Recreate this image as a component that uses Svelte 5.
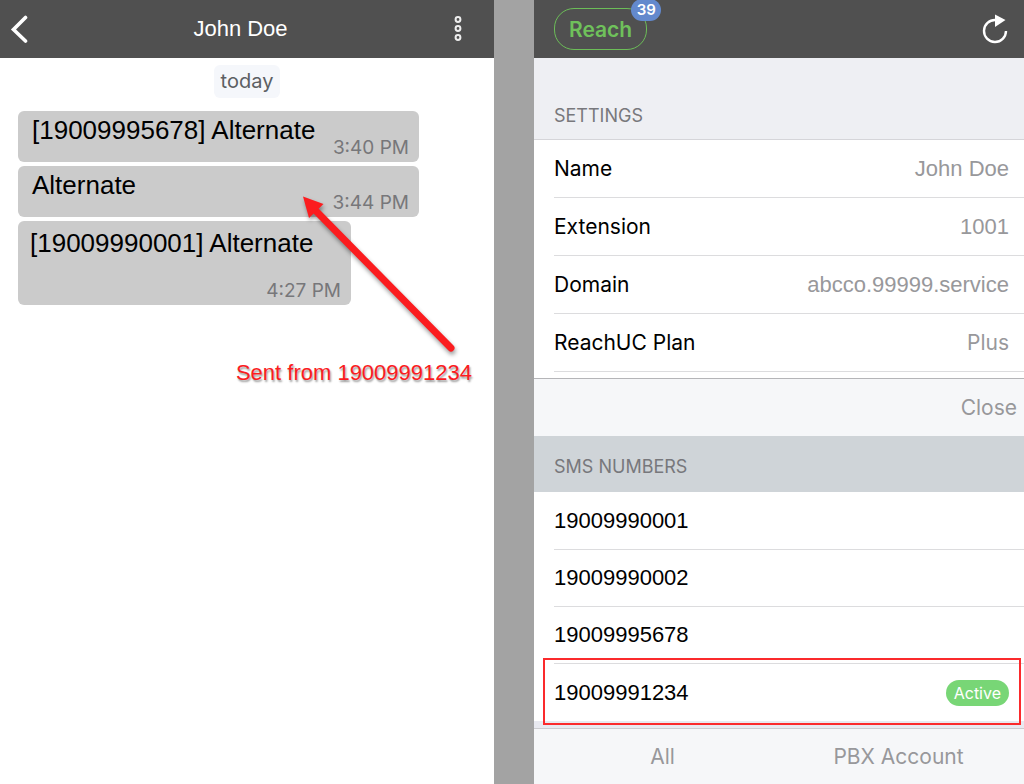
<script>
    const messages = [
        { text: "[19009995678] Alternate", time: "3:40 PM", tall: false },
        { text: "Alternate", time: "3:44 PM", tall: false },
        { text: "[19009990001] Alternate", time: "4:27 PM", tall: true },
    ];

    const settings = [
        { label: "Name", value: "John Doe" },
        { label: "Extension", value: "1001" },
        { label: "Domain", value: "abcco.99999.service" },
        { label: "ReachUC Plan", value: "Plus", system: true },
    ];

    const numbers = ["19009990001", "19009990002", "19009995678", "19009991234"];

    let active = "19009991234";
</script>

<main>
    <section class="chat">
        <header class="chat-bar">
            <button type="button" class="icon" aria-label="Back">
                <svg width="18" height="30" viewBox="0 0 18 30">
                    <path d="M15.500 3.500 L3.500 15.500 L15.500 27" fill="none" stroke="#fff" stroke-width="3.600" stroke-linecap="round" />
                </svg>
            </button>
            <h1>John Doe</h1>
            <button type="button" class="icon" aria-label="More">
                <svg width="10" height="28" viewBox="0 0 10 28">
                    <g fill="none" stroke="#eee" stroke-width="2">
                        <circle cx="5" cy="4.500" r="2.400" />
                        <circle cx="5" cy="13.500" r="2.400" />
                        <circle cx="5" cy="22.500" r="2.400" />
                    </g>
                </svg>
            </button>
        </header>

        <div class="thread">
            <p class="day">today</p>
            <ul class="messages">
                {#each messages as message}
                    <li class="bubble" class:tall={message.tall}>
                        <span class="text">{message.text}</span>
                        <time>{message.time}</time>
                    </li>
                {/each}
            </ul>
            <svg class="arrow" width="170" height="170" viewBox="0 0 170 170" aria-hidden="true">
                <path d="M18 16 L153 153" stroke="#fb1c1f" stroke-width="7" stroke-linecap="round" />
                <path d="M5 1.500 L25.500 9 L11 23 Z" fill="#fb1c1f" />
            </svg>
            <p class="note">Sent from 19009991234</p>
        </div>
    </section>

    <div class="gutter"></div>

    <section class="account">
        <header class="account-bar">
            <button type="button" class="reach">Reach<span class="count">39</span></button>
            <button type="button" class="icon" aria-label="Refresh">
                <svg width="28" height="30" viewBox="0 0 28 30">
                    <path d="M14.500 6 A11 11 0 1 0 25 17" fill="none" stroke="#fff" stroke-width="2.400" />
                    <path d="M14 0.500 L24.500 6 L14 13 Z" fill="#fff" />
                </svg>
            </button>
        </header>

        <h2 class="settings-title">SETTINGS</h2>
        <dl class="settings">
            {#each settings as row}
                <div class="row">
                    <dt>{row.label}</dt>
                    <dd class:system={row.system}>{row.value}</dd>
                </div>
            {/each}
        </dl>

        <div class="sheet-bar">
            <button type="button">Close</button>
        </div>
        <h2 class="sms-title">SMS NUMBERS</h2>
        <ul class="numbers">
            {#each numbers as number}
                <li class="row">
                    {number}
                    {#if number === active}
                        <span class="badge">Active</span>
                        <span class="highlight"></span>
                    {/if}
                </li>
            {/each}
        </ul>
        <div class="spacer"></div>

        <footer>
            <button type="button">All</button>
            <button type="button">PBX Account</button>
        </footer>
    </section>
</main>

<style>
    :global(body) {
        font-family: "Liberation Sans", Arial, sans-serif;
        font-size: 22px;
        color: #000;
    }

    main {
        display: grid;
        grid-template-columns: 247fr 40px 245fr;
        min-height: 100vh;
    }

    h1,
    h2,
    p,
    ul,
    dl,
    dd {
        margin: 0;
        padding: 0;
        font-weight: normal;
    }

    ul {
        list-style: none;
    }

    button {
        border: none;
        padding: 0;
        background: none;
        font-family: Inter, sans-serif;
        font-size: 21px;
        color: #98989b;
        cursor: pointer;
    }

    .icon svg {
        display: block;
    }

    .chat {
        background: #fff;
    }

    .gutter {
        background: #a3a3a3;
    }

    .chat-bar,
    .account-bar {
        box-sizing: border-box;
        display: flex;
        align-items: center;
        justify-content: space-between;
        height: 58px;
        background: #505050;
    }

    .chat-bar {
        padding: 0 31px 0 10px;
    }

    h1 {
        font-size: 22px;
        color: #fff;
    }

    .thread {
        position: relative;
        padding: 7px 18px;
    }

    .day {
        width: fit-content;
        margin: 0 auto 13px;
        padding: 0 7px;
        border-radius: 6px;
        background: #f5f7fb;
        font-family: Inter, sans-serif;
        font-size: 20px;
        line-height: 33px;
        color: #5c5f63;
    }

    .messages {
        display: flex;
        flex-direction: column;
        gap: 4px;
    }

    .bubble {
        box-sizing: border-box;
        display: flex;
        justify-content: space-between;
        width: 401px;
        max-width: 100%;
        min-height: 51px;
        padding: 4px 10px 4px 14px;
        border-radius: 6px;
        background: #cbcbcb;
    }

    .bubble.tall {
        width: 333px;
        min-height: 84px;
        flex-direction: column;
        padding: 7px 10px 4px 12px;
    }

    .text {
        font-size: 26px;
        line-height: 30px;
    }

    time {
        align-self: flex-end;
        font-family: Inter, sans-serif;
        font-size: 19px;
        line-height: 20px;
        color: #77777a;
    }

    .arrow {
        position: absolute;
        top: 137px;
        left: 298px;
        filter: drop-shadow(1px 3px 2px rgba(0, 0, 0, 0.4));
    }

    .note {
        margin: 55px 4px 0 0;
        text-align: right;
        line-height: 26px;
        color: #fb1c1f;
        text-shadow: 1px 2px 2px rgba(0, 0, 0, 0.4);
    }

    .account {
        display: flex;
        flex-direction: column;
        background: #fff;
    }

    .account-bar {
        padding: 0 15px 0 20px;
    }

    .reach {
        position: relative;
        box-sizing: border-box;
        height: 42px;
        padding: 0 14px;
        border: 1px solid #6cbd58;
        border-radius: 20px;
        font-weight: 600;
        color: #6fc15b;
    }

    .count {
        position: absolute;
        top: -10px;
        right: -15px;
        width: 30px;
        border-radius: 12px;
        background: #6389cd;
        font-size: 15px;
        line-height: 22px;
        color: #fff;
    }

    h2 {
        padding: 0 20px;
        font-family: Inter, sans-serif;
        font-size: 18px;
        color: #78787c;
    }

    .settings-title {
        padding-top: 34px;
        border-bottom: 1px solid #d5d5d9;
        background: #eeeff3;
        line-height: 47px;
    }

    .sms-title {
        padding-top: 6px;
        background: #cfd4d8;
        line-height: 50px;
    }

    .row {
        position: relative;
        box-sizing: border-box;
        display: flex;
        align-items: center;
        justify-content: space-between;
        height: 58px;
        margin-left: 20px;
        padding-right: 15px;
        border-bottom: 1px solid #dcdcde;
    }

    .settings {
        padding-bottom: 6px;
    }

    dt,
    .system {
        font-family: Inter, sans-serif;
        font-size: 21px;
    }

    dd {
        color: #98989b;
    }

    .sheet-bar {
        display: flex;
        justify-content: flex-end;
        padding: 0 7px;
        border-top: 1px solid #b5b5b8;
        background: #f6f7f9;
        line-height: 57px;
    }

    .numbers {
        padding-top: 1px;
    }

    .numbers .row {
        height: 57px;
    }

    .numbers .row:last-child {
        border-bottom: none;
    }

    .badge {
        padding: 0 8px;
        border-radius: 13px;
        background: #78d676;
        font-family: Inter, sans-serif;
        font-size: 16px;
        line-height: 26px;
        color: #fff;
    }

    .highlight {
        position: absolute;
        inset: -6px 3px -4px -11px;
        border: 2px solid #fb2a2c;
    }

    .spacer {
        flex: 1;
        min-height: 7px;
        background: #e8e9f0;
    }

    footer {
        display: grid;
        grid-template-columns: 257fr 215fr;
        padding-right: 18px;
        border-top: 1px solid #ccccd0;
        background: #f6f7f9;
        line-height: 55px;
    }

    footer button,
    .sheet-bar button {
        line-height: inherit;
    }
</style>
